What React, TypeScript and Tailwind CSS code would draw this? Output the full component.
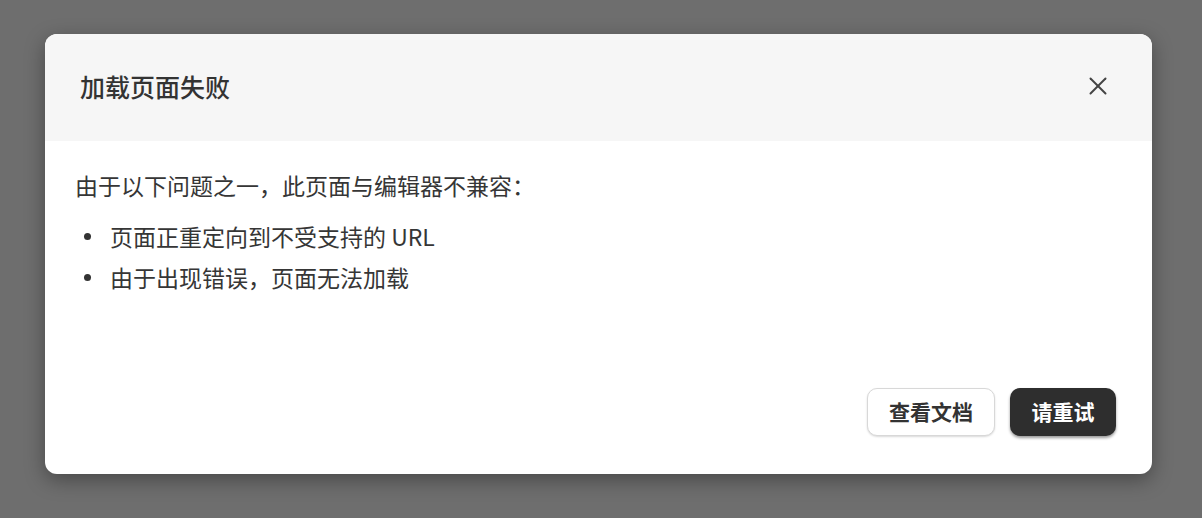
import { X } from 'lucide-react';

const font = { fontFamily: '"Noto Sans CJK SC", "Noto Sans", sans-serif' };

export default function App() {
  return (
    <div className="w-[1202px] h-[518px] bg-[#6e6e6e] pt-[34px] pl-[45px]" style={font}>
      <div className="w-[1107px] h-[440px] bg-white rounded-[12px] overflow-hidden flex flex-col shadow-[0_6px_20px_rgba(0,0,0,0.35)]">
        <div className="h-[107px] bg-[#f6f6f6] flex items-center justify-between pl-[35px] pr-[39px] pb-[3px] shrink-0">
          <h2 className="text-[25px] font-medium text-[#333] leading-none">加载页面失败</h2>
          <X className="w-[30px] h-[30px] text-[#444]" strokeWidth={1.6} />
        </div>
        <div className="flex-1 flex flex-col pl-[30px] pr-[36px] pt-[29px] pb-[38px] text-[23px] text-[#363636]">
          <p className="leading-[30px]">由于以下问题之一，此页面与编辑器不兼容：</p>
          <ul className="mt-[21px] flex flex-col gap-[11px]">
            <li className="flex items-center leading-[30px]">
              <span className="w-[7px] h-[7px] rounded-full bg-[#333] ml-[9px] mr-[19px]" />
              页面正重定向到不受支持的 URL
            </li>
            <li className="flex items-center leading-[30px]">
              <span className="w-[7px] h-[7px] rounded-full bg-[#333] ml-[9px] mr-[19px]" />
              由于出现错误，页面无法加载
            </li>
          </ul>
          <div className="mt-auto flex justify-end gap-[15px]">
            <button className="h-[48px] w-[128px] rounded-[10px] bg-white border border-[#d8d8d8] shadow-[0_1px_2px_rgba(0,0,0,0.15)] text-[21px] font-bold text-[#333]">
              查看文档
            </button>
            <button className="h-[48px] w-[106px] rounded-[10px] bg-[#2e2e2e] shadow-[0_2px_3px_rgba(0,0,0,0.4)] text-[21px] font-bold text-white">
              请重试
            </button>
          </div>
        </div>
      </div>
    </div>
  );
}
